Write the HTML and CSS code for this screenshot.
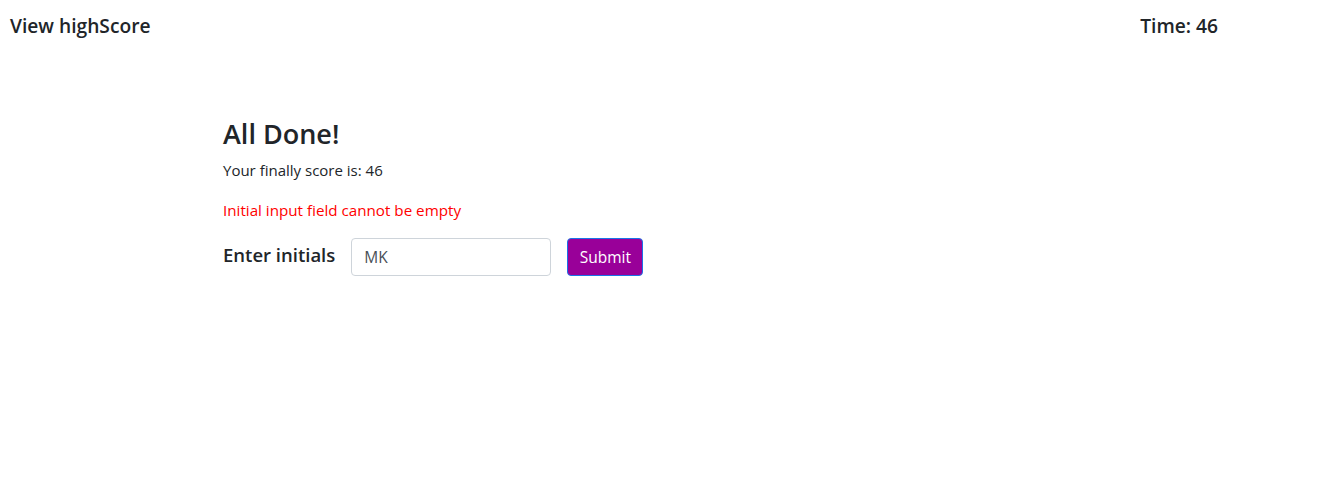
FILE: index.html
```html
<!DOCTYPE html>
<html lang="en">
<head>
<meta charset="utf-8">
<title>Quiz</title>
<link rel="stylesheet" href="styles.css">
</head>
<body>
<header class="topbar">
  <a class="highscore" href="#">View highScore</a>
  <div class="timer">Time: 46</div>
</header>
<main class="done">
  <h3 class="done-title">All Done!</h3>
  <p class="score">Your finally score is: 46</p>
  <p class="error">Initial input field cannot be empty</p>
  <form class="initials-form">
    <label class="initials-label" for="initials">Enter initials</label>
    <input class="initials-input" id="initials" type="text" value="MK">
    <button class="submit-btn" type="button">Submit</button>
  </form>
</main>
</body>
</html>
```
FILE: styles.css
```css
* { box-sizing: border-box; }
body {
  margin: 0;
  font-family: "Open Sans", "Noto Sans", sans-serif;
  font-size: 15px;
  color: #212529;
  background: #fff;
}
.topbar {
  display: flex;
  justify-content: space-between;
  align-items: center;
  padding: 14px 114px 0 10px;
}
.highscore, .timer {
  font-size: 19.2px;
  font-weight: 600;
  color: #212529;
  text-decoration: none;
  line-height: 24px;
}
.done {
  padding: 80px 0 0 223px;
}
.done-title {
  margin: 0 0 9px;
  font-size: 27px;
  font-weight: 600;
  line-height: 32px;
}
.score {
  margin: 0 0 17px;
  line-height: 22px;
}
.error {
  margin: 0 0 17px;
  padding-top: 1px;
  font-size: 15.2px;
  color: #ff0000;
  line-height: 22px;
}
.initials-form {
  display: flex;
  align-items: center;
  gap: 16px;
}
.initials-label {
  font-size: 18.5px;
  font-weight: 600;
  margin-bottom: 6px;
}
.initials-input {
  width: 200px;
  height: 38px;
  padding: 6px 12px;
  font: inherit;
  font-size: 15.5px;
  color: #495057;
  border: 1px solid #ced4da;
  border-radius: 4px;
  background: #fff;
}
.submit-btn {
  height: 38px;
  width: 76px;
  font: inherit;
  font-size: 15.5px;
  color: #fff;
  background: #990099;
  border: 1px solid #1a73e8;
  border-radius: 4px;
  padding: 6px 10px;
}
```
